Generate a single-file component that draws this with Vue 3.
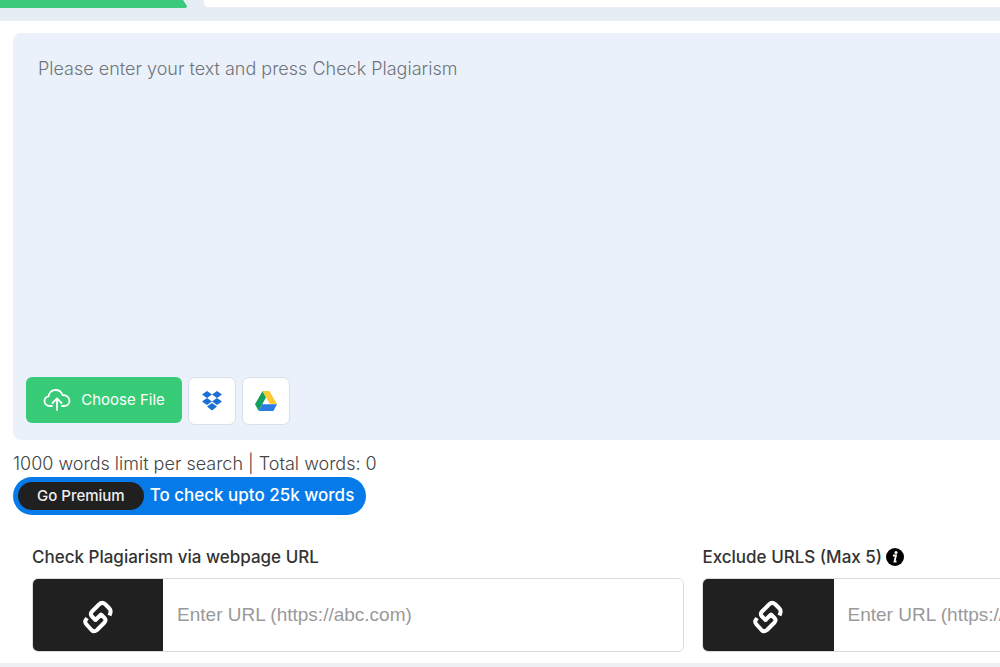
<script setup>
import { ref } from 'vue'

const text = ref('')
const fields = [
  { id: 'page-url', label: 'Check Plagiarism via webpage URL', info: false },
  { id: 'exclude-url', label: 'Exclude URLS (Max 5)', info: true },
]
</script>

<template>
  <main class="page">
    <header class="tabs">
      <svg class="tab-active" viewBox="0 0 188 8" aria-hidden="true">
        <path d="M0 0H183L187 6Q187 8 184 8H0Z" fill="#3bc97b" />
      </svg>
      <span class="tab-rest"></span>
    </header>

    <section class="editor">
      <textarea v-model="text" aria-label="Text to check" placeholder="Please enter your text and press Check Plagiarism"></textarea>
      <div class="sources">
        <button class="choose" type="button">
          <svg width="28" height="24" viewBox="0 0 28 24" fill="none" stroke="#fff" stroke-width="1.8" stroke-linecap="round" stroke-linejoin="round" aria-hidden="true">
            <path d="M9 18H7C3.500 18 1.500 16 1.500 13C1.500 10.500 3 8.800 5.500 8.300C6 4.500 9 2 12.500 2C16 2 18.500 4 19.500 7C23.500 7 26.500 9.500 26.500 13C26.500 16 24 18 21 18H19" />
            <path d="M14 22V11M9.500 15L14 10.500L18.500 15" />
          </svg>
          <span>Choose File</span>
        </button>
        <button class="cloud" type="button" aria-label="Dropbox">
          <svg width="20" height="20" viewBox="0 0 20 20" fill="#1b6fd6" aria-hidden="true">
            <path d="M5 0L10 3.500L5 7L0 3.500ZM15 0L20 3.500L15 7L10 3.500ZM5 7L10 10.500L5 14L0 10.500ZM15 7L20 10.500L15 14L10 10.500ZM5 15.500L10 12L15 15.500L10 19.500Z" />
          </svg>
        </button>
        <button class="cloud" type="button" aria-label="Google Drive">
          <svg width="22" height="20" viewBox="0 0 22 20" aria-hidden="true">
            <path d="M7.500 0L11 6.200L3.700 20L0 13.200Z" fill="#12a05c" />
            <path d="M7.500 0H14.500L22 13.200H15Z" fill="#fdca34" />
            <path d="M7.300 13.200H22L18.400 20H3.700Z" fill="#2a7be4" />
          </svg>
        </button>
      </div>
    </section>

    <p class="limit">1000 words limit per search | Total words: 0</p>
    <a class="premium" href="#premium"><span class="pill">Go Premium</span><span class="offer">To check upto 25k words</span></a>

    <section class="urls">
      <div v-for="field in fields" :key="field.id" class="field">
        <div class="caption">
          <label :for="field.id">{{ field.label }}</label>
          <svg v-if="field.info" width="18" height="18" viewBox="0 0 18 18" aria-hidden="true">
            <circle cx="9" cy="9" r="9" fill="#000" />
            <circle cx="10" cy="4.500" r="1.500" fill="#fff" />
            <path d="M7 7.500H10L8.500 13.500H10.500" fill="none" stroke="#fff" stroke-width="1.800" />
          </svg>
        </div>
        <div class="group">
          <span class="addon">
            <svg width="30" height="34" viewBox="0 0 30 34" fill="none" stroke="#fff" stroke-width="4" stroke-linejoin="round" aria-hidden="true">
              <path d="M26.500 15.500L27.500 12.500Q28 10 26 8L22 4Q19 1.500 16 4.500L9 11.500Q6.500 14 9 16.500L12.500 20L18 14.500L21.500 18Q23.500 20 21.500 22.500L14 30Q11 32.500 8.500 30L4 25Q1.500 22.500 2.500 20.500L4 18" />
            </svg>
          </span>
          <input :id="field.id" type="url" placeholder="Enter URL (https://abc.com)" />
        </div>
      </div>
    </section>
    <footer class="edge"></footer>
  </main>
</template>

<style>
body {
  background: #fff;
  overflow: hidden;
}
</style>

<style scoped>
.page {
  font-family: Inter, "Open Sans", sans-serif;
  color: #444;
  overflow: hidden;
}
.page * {
  box-sizing: border-box;
}
.tabs {
  display: flex;
  gap: 16px;
  height: 21px;
  background: #e7edf4;
}
.tab-active {
  width: 188px;
  height: 8px;
  flex: none;
}
.tab-rest {
  flex: 1;
  height: 7px;
  background: #fff;
  border-bottom-left-radius: 4px;
}
.editor {
  margin: 12px 0 0 13px;
  background: #eaf1fb;
  border-radius: 8px 0 0 8px;
}
textarea {
  display: block;
  width: 100%;
  height: 344px;
  padding: 24px 25px;
  border: 0;
  outline: 0;
  resize: none;
  background: transparent;
  font: 300 18px/24px Inter, sans-serif;
  color: #444;
}
textarea::placeholder {
  color: #6f7479;
  opacity: 1;
}
.sources {
  display: flex;
  gap: 6px;
  padding: 0 13px 15px;
}
button {
  border: 0;
  padding: 0;
  display: flex;
  align-items: center;
  justify-content: center;
  font: inherit;
  cursor: pointer;
}
.choose {
  width: 156px;
  height: 46px;
  gap: 10px;
  border-radius: 6px;
  background: #38cb77;
  color: #fff;
  font-size: 15px;
}
.choose span {
  padding-bottom: 2px;
}
.cloud {
  width: 48px;
  height: 48px;
  border: 1px solid #d9dfe6;
  border-radius: 7px;
  background: #fff;
}
.limit {
  margin: 12px 13px 2px;
  font-size: 18px;
  font-weight: 300;
  line-height: 23px;
}
.premium {
  display: inline-flex;
  align-items: center;
  gap: 6px;
  height: 38px;
  margin-left: 13px;
  padding: 0 12px 0 5px;
  border-radius: 19px;
  background: #067ae8;
  color: #fff;
  font-size: 17px;
  font-weight: 500;
  text-decoration: none;
  vertical-align: top;
}
.pill {
  padding: 0 19px;
  border-radius: 14px;
  background: #202020;
  color: #eee;
  font-size: 15px;
  line-height: 28px;
}
.offer {
  padding-bottom: 2px;
}
.urls {
  display: grid;
  grid-template-columns: repeat(2, 67.4%);
  gap: 18px;
  margin: 30px 0 11px;
  padding-left: 32px;
}
.caption {
  display: flex;
  align-items: center;
  gap: 4px;
  height: 24px;
  margin-bottom: 9px;
  font-size: 17px;
  font-weight: 500;
  color: #333;
}
.group {
  display: flex;
  height: 74px;
  border: 1px solid #d8dcdf;
  border-radius: 6px;
  overflow: hidden;
}
.addon {
  flex: 0 0 20%;
  display: flex;
  align-items: center;
  justify-content: center;
  padding-top: 4px;
  background: #202020;
}
input {
  flex: 1;
  min-width: 0;
  padding: 0 14px;
  border: 0;
  outline: 0;
  background: #fff;
  font: 19px "Liberation Sans", Arial, sans-serif;
  color: #444;
}
input::placeholder {
  color: #999;
  opacity: 1;
}
.edge {
  height: 4px;
  background: #edf0f3;
}
</style>
